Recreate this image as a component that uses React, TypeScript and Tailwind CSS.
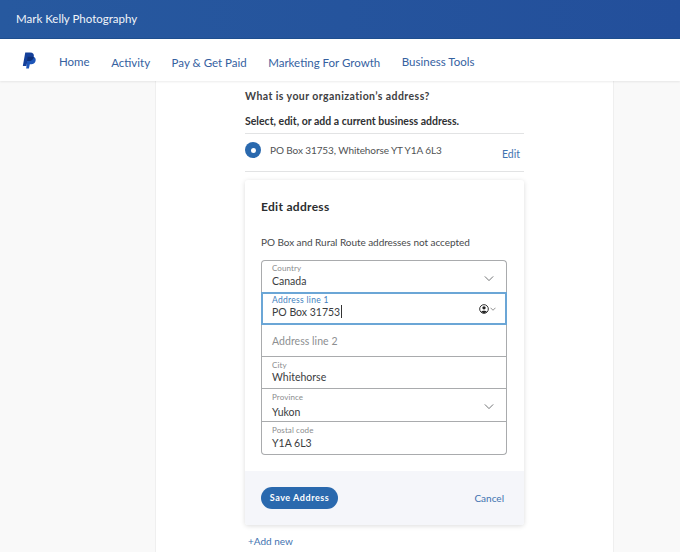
const navItems = [
  { label: 'Home', cls: 'mt-[-2px]' },
  { label: 'Activity', cls: '' },
  { label: 'Pay & Get Paid', cls: '' },
  { label: 'Marketing For Growth', cls: '' },
  { label: 'Business Tools', cls: 'mt-[-2px]' },
];

function Chevron({ className }: { className: string }) {
  return (
    <svg viewBox="0 0 12 8" fill="none" stroke="currentColor" strokeWidth="1" className={className}>
      <path d="M1 1.5 L6 6.5 L11 1.5" />
    </svg>
  );
}

function Field({
  label,
  value,
  chevron,
  className,
  valueClass,
}: {
  label: string;
  value: string;
  chevron?: boolean;
  className: string;
  valueClass: string;
}) {
  return (
    <div className={`relative flex flex-col border-[#a9abad] pl-[10px] ${className}`}>
      <span className="text-[8px] leading-[10px] tracking-[0.1px] text-[#8a8c8e]">{label}</span>
      <span className={`text-[10.5px] leading-[14px] text-[#3a3c3e] ${valueClass}`}>{value}</span>
      {chevron && <Chevron className="absolute right-[12px] top-[14px] h-[7px] w-[10px] text-[#55585a]" />}
    </div>
  );
}

export default function App() {
  return (
    <div className="flex h-[552px] w-[680px] flex-col overflow-hidden bg-[#f9f9f9] font-['Lato','Noto_Sans',sans-serif]">
      <header className="flex h-[39px] shrink-0 items-center border-b border-[#1f4f8f] bg-gradient-to-r from-[#27599f] to-[#234f9b] pl-[16px] pb-[1px]">
        <span className="text-[11.5px] text-[#f1f4f9]">Mark Kelly Photography</span>
      </header>

      <nav className="z-10 flex h-[42px] shrink-0 items-center bg-white pl-[22px] shadow-[0_1px_2px_rgba(0,0,0,0.08)]">
        <svg viewBox="0 0 24 28" className="h-[17px] w-[15px]">
          <path fill="#1d55b8" d="M9 8 H17 C21 8 23 11 22 15 C21 19 18 20 15 20 H12.5 L11 27 H6.5 Z" />
          <path fill="#14409a" d="M5 1 H13 C18 1 20 4 19 8 C18 13 14 15 10.5 15 H8.5 L7 23 H1 Z" />
          <path fill="#0c2f78" d="M9 8 H17 C18.5 8 19 8.5 19 9 C18 13 14 15 10.5 15 H8 Z" />
        </svg>
        <div className="ml-[22px] mt-[6px] flex items-center gap-[21.5px]">
          {navItems.map((item) => (
            <a key={item.label} className={`text-[11.5px] text-[#35619f] ${item.cls}`}>
              {item.label}
            </a>
          ))}
        </div>
      </nav>

      <main className="ml-[155px] flex w-[459px] flex-1 flex-col border-x border-[#efefef] bg-white pl-[89px] pr-[89px] pt-[7px]">
        <p className="text-[10.5px] font-bold leading-[16px] tracking-[0.43px] text-[#3e4042]">
          What is your organization’s address?
        </p>
        <p className="mt-[9px] text-[10.5px] font-bold leading-[16px] text-[#2f3133]">
          Select, edit, or add a current business address.
        </p>

        <div className="mt-[4px] flex h-[39px] shrink-0 border-y border-[#e2e3e4]">
          <span className="mt-[8px] flex h-[16px] w-[16px] shrink-0 items-center justify-center rounded-full bg-[#2a69ae]">
            <span className="h-[5px] w-[5px] rounded-full bg-white" />
          </span>
          <span className="ml-[9px] mt-[8px] text-[10px] leading-[16px] tracking-[-0.1px] text-[#505254]">
            PO Box 31753, Whitehorse YT Y1A 6L3
          </span>
          <span className="ml-auto mr-[4px] mt-[12px] text-[10.5px] leading-[16px] text-[#3f73b0]">
            Edit
          </span>
        </div>

        <section className="mt-[8px] w-[279px] shrink-0 rounded-[3px] bg-white shadow-[0_1px_5px_rgba(0,0,0,0.14)]">
          <div className="pb-[16px] pl-[16px] pr-[17px] pt-[19px]">
            <h2 className="text-[12px] font-bold leading-[16px] tracking-[0.3px] text-[#2b2d2f]">Edit address</h2>
            <p className="mt-[20px] text-[10px] leading-[14px] tracking-[-0.05px] text-[#47494b]">
              PO Box and Rural Route addresses not accepted
            </p>

            <div className="mt-[11px] flex flex-col">
              <Field label="Country" value="Canada" chevron valueClass="mt-[1px]" className="h-[32px] rounded-t-[4px] border border-b-0 pt-[2px]" />
              <div className="relative flex h-[33px] flex-col border-2 border-[#6ba6d6] pl-[9px] pt-[1px]">
                <span className="text-[8.5px] leading-[10px] tracking-[0.3px] text-[#3f7fc0]">Address line 1</span>
                <span className="flex text-[10.5px] leading-[14px] text-[#3a3c3e]">
                  PO Box 31753
                  <span className="ml-[1px] h-[13px] w-px bg-[#333]" />
                </span>
                <span className="absolute right-[9px] top-[10px] flex items-center gap-[1px] text-[#222]">
                  <svg viewBox="0 0 12 12" className="h-[10px] w-[10px]" fill="none" stroke="currentColor">
                    <circle cx="6" cy="6" r="5.2" strokeWidth="1.1" />
                    <circle cx="6" cy="4.6" r="2" fill="currentColor" stroke="none" />
                    <path d="M2.6 9.6 C3.4 7.6 8.6 7.6 9.4 9.6 L6 11 Z" fill="currentColor" stroke="none" />
                  </svg>
                  <Chevron className="h-[4px] w-[6px]" />
                </span>
              </div>
              <div className="flex h-[32px] items-center border-x border-b border-[#a9abad] pl-[10px] pt-[2px]">
                <span className="text-[10.5px] tracking-[0.05px] text-[#8d8f91]">Address line 2</span>
              </div>
              <Field label="City" value="Whitehorse" valueClass="" className="h-[32px] border-x border-b pt-[3px]" />
              <Field label="Province" value="Yukon" chevron valueClass="mt-[3px]" className="h-[33px] border-x border-b pt-[3px]" />
              <Field label="Postal code" value="Y1A 6L3" valueClass="mt-[1px]" className="h-[33px] rounded-b-[4px] border-x border-b pt-[3px]" />
            </div>
          </div>

          <div className="flex h-[54px] items-center justify-between rounded-b-[3px] bg-[#f5f6fa] pl-[16px] pr-[20px]">
            <button className="h-[22px] w-[77px] rounded-full bg-[#2a69ae] text-[9px] font-bold tracking-[0.55px] text-white">
              Save Address
            </button>
            <a className="text-[10px] text-[#3f73b0]">Cancel</a>
          </div>
        </section>

        <a className="ml-[3px] mt-[9px] text-[10px] leading-[14px] text-[#3f73b0]">+Add new</a>
      </main>
    </div>
  );
}
